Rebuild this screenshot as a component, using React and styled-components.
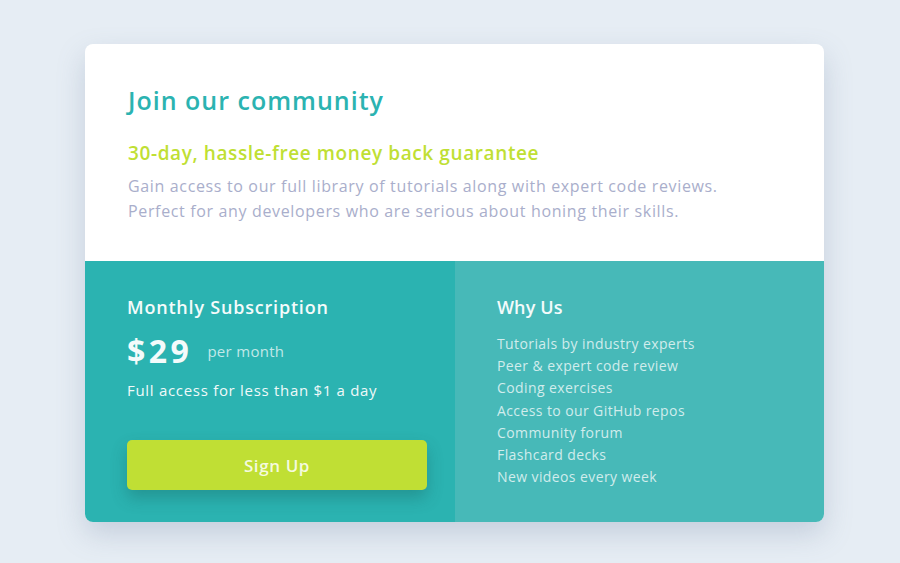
import styled, { createGlobalStyle } from "styled-components";

const Cyan = "#2bb3b1";
const LightCyan = "#47b9b8";
const Yellow = "#c0df34";
const GrayBlue = "#a9aecb";

const GlobalStyle = createGlobalStyle`
  html, body {
    margin: 0;
    padding: 0;
    background: #e6edf4;
    font-family: "Open Sans", "Liberation Sans", sans-serif;
  }
`;

const App = () => {
  const reasons = [
    "Tutorials by industry experts",
    "Peer & expert code review",
    "Coding exercises",
    "Access to our GitHub repos",
    "Community forum",
    "Flashcard decks",
    "New videos every week",
  ];
  return (
    <Page>
      <GlobalStyle />
      <Card>
        <Top>
          <Title>Join our community</Title>
          <Subtitle>30-day, hassle-free money back guarantee</Subtitle>
          <Text>
            Gain access to our full library of tutorials along with expert code reviews.
            <br />
            Perfect for any developers who are serious about honing their skills.
          </Text>
        </Top>
        <Bottom>
          <Column $bg={Cyan}>
            <Heading $wide>Monthly Subscription</Heading>
            <PriceRow>
              <Price>$29</Price>
              <Per>per month</Per>
            </PriceRow>
            <Note>Full access for less than $1 a day</Note>
            <Button>Sign Up</Button>
          </Column>
          <Column $bg={LightCyan}>
            <Heading>Why Us</Heading>
            <List>
              {reasons.map((r) => (
                <Item key={r}>{r}</Item>
              ))}
            </List>
          </Column>
        </Bottom>
      </Card>
    </Page>
  );
};

const Page = styled.div`
  width: 900px;
  height: 563px;
  padding-top: 44px;
  box-sizing: border-box;
  display: flex;
  justify-content: center;
  align-items: flex-start;
`;

const Card = styled.div`
  width: 739px;
  height: 478px;
  margin-left: 9px;
  border-radius: 8px;
  overflow: hidden;
  background: white;
  box-shadow: 0 12px 28px rgba(110, 130, 160, 0.28);
  display: flex;
  flex-direction: column;
`;

const Top = styled.div`
  height: 217px;
  box-sizing: border-box;
  padding: 41px 43px 0;
`;

const Title = styled.h1`
  margin: 0;
  font-size: 25px;
  font-weight: 600;
  color: ${Cyan};
  letter-spacing: 1px;
  line-height: 30px;
`;

const Subtitle = styled.h2`
  margin: 27px 0 0;
  font-size: 19px;
  font-weight: 600;
  color: ${Yellow};
  letter-spacing: 0.6px;
  line-height: 22px;
`;

const Text = styled.p`
  margin: 10px 0 0;
  font-size: 16px;
  line-height: 25px;
  color: ${GrayBlue};
  letter-spacing: 0.65px;
`;

const Bottom = styled.div`
  flex: 1;
  display: grid;
  grid-template-columns: 370px 1fr;
`;

const Column = styled.div`
  background: ${(p) => p.$bg};
  padding: 34px 43px 0 42px;
  color: white;
  display: flex;
  flex-direction: column;
  align-items: flex-start;
`;

const Heading = styled.h3`
  margin: 0;
  font-size: 18px;
  font-weight: 600;
  line-height: 24px;
  letter-spacing: ${(p) => (p.$wide ? "0.8px" : "0.1px")};
  color: #f4fbfb;
`;

const PriceRow = styled.div`
  display: flex;
  align-items: center;
  gap: 15px;
  margin-top: 14px;
`;

const Price = styled.span`
  font-size: 32px;
  font-weight: 700;
  line-height: 36px;
  letter-spacing: 3.5px;
  color: #f4fbfb;
`;

const Per = styled.span`
  font-size: 15px;
  letter-spacing: 0.3px;
  color: rgba(255, 255, 255, 0.72);
`;

const Note = styled.div`
  margin-top: 11px;
  font-size: 15px;
  line-height: 20px;
  letter-spacing: 0.7px;
  color: #f0f9f9;
`;

const Button = styled.button`
  margin-top: 40px;
  width: 300px;
  height: 50px;
  border: none;
  border-radius: 5px;
  background: ${Yellow};
  color: rgba(255, 255, 255, 0.85);
  font-family: inherit;
  font-size: 17px;
  font-weight: 600;
  letter-spacing: 0.6px;
  box-shadow: 0 8px 16px rgba(20, 80, 80, 0.3);
  cursor: pointer;
`;

const List = styled.ul`
  list-style: none;
  margin: 14px 0 0;
  padding: 0;
`;

const Item = styled.li`
  font-size: 14px;
  line-height: 22.2px;
  letter-spacing: 0.4px;
  color: rgba(255, 255, 255, 0.75);
`;

export default App;
